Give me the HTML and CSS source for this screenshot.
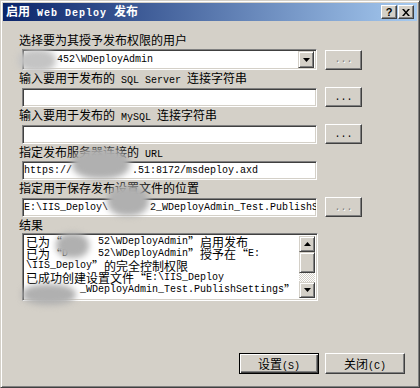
FILE: index.html
```html
<!DOCTYPE html>
<html lang="zh-CN">
<head>
<meta charset="UTF-8">
<title>启用 Web Deploy 发布</title>
<link rel="stylesheet" href="styles.css">
</head>
<body>
<div class="window">
    <div class="titlebar">
        <span class="title">启用<span class="en"> Web Deploy </span>发布</span>
        <div class="caption-btns">
            <span class="cap-btn cap-help">?</span>
            <span class="cap-btn">
                <svg width="8" height="7" viewBox="0 0 8 7"><path d="M0 0h2l2 2.5L6 0h2L5 3.5 8 7H6L4 4.5 2 7H0l3-3.5z" fill="#000"/></svg>
            </span>
        </div>
    </div>

    <div class="content">
        <div class="field">
            <label>选择要为其授予发布权限的用户</label>
            <div class="row">
                <div class="combo">
                    <span class="combo-text en">&nbsp;&nbsp;&nbsp;&nbsp;&nbsp;452\WDeployAdmin</span>
                    <span class="drop">
                        <svg width="7" height="4" viewBox="0 0 7 4"><path d="M0 0h7L3.5 4z" fill="#000"/></svg>
                    </span>
                </div>
                <button class="dots" disabled>...</button>
            </div>
        </div>
        <div class="field">
            <label>输入要用于发布的<span class="en"> SQL Server </span>连接字符串</label>
            <div class="row">
                <input class="edit" type="text" value="">
                <button class="dots">...</button>
            </div>
        </div>
        <div class="field">
            <label>输入要用于发布的<span class="en"> MySQL </span>连接字符串</label>
            <div class="row">
                <input class="edit" type="text" value="">
                <button class="dots">...</button>
            </div>
        </div>
        <div class="field">
            <label>指定发布服务器连接的<span class="en"> URL</span></label>
            <div class="row">
                <input class="edit" type="text" value="https://          .51:8172/msdeploy.axd">
            </div>
        </div>
        <div class="field">
            <label>指定用于保存发布设置文件的位置</label>
            <div class="row">
                <input class="edit" type="text" value="E:\IIS_Deploy\       2_WDeployAdmin_Test.PublishSettings">
                <button class="dots" disabled>...</button>
            </div>
        </div>
        <div class="field">
            <label>结果</label>
            <div class="results">
                <div class="results-text">
                    <div class="line">已为<span class="q ql">“</span><span class="en">&nbsp;&nbsp;&nbsp;&nbsp;&nbsp;&nbsp;52\WDeployAdmin</span><span class="q qr">”</span>启用发布</div>
                    <div class="line">已为<span class="q ql">“</span><span class="en">D&nbsp;&nbsp;&nbsp;&nbsp;&nbsp;52\WDeployAdmin</span><span class="q qr">”</span>授予在<span class="q ql">“</span><span class="en">E:</span></div>
                    <div class="line"><span class="en">\IIS_Deploy</span><span class="q qr">”</span>的完全控制权限</div>
                    <div class="line">已成功创建设置文件<span class="q ql">“</span><span class="en">E:\IIS_Deploy</span></div>
                    <div class="line"><span class="en">&nbsp;&nbsp;&nbsp;&nbsp;&nbsp;&nbsp;&nbsp;&nbsp;&nbsp;_WDeployAdmin_Test.PublishSettings</span><span class="q qr">”</span></div>
                </div>
                <div class="scrollbar">
                    <span class="sb-btn">
                        <svg width="7" height="4" viewBox="0 0 7 4"><path d="M0 4h7L3.5 0z" fill="#000"/></svg>
                    </span>
                    <span class="sb-thumb"></span>
                    <span class="sb-track"></span>
                    <span class="sb-btn">
                        <svg width="7" height="4" viewBox="0 0 7 4"><path d="M0 0h7L3.5 4z" fill="#000"/></svg>
                    </span>
                </div>
            </div>
        </div>
    </div>

    <div class="footer">
        <button class="btn btn-default">设置<span class="en">(S)</span></button>
        <button class="btn">关闭<span class="en">(C)</span></button>
    </div>

    <!-- размытые места на исходном снимке -->
    <div class="blur blur-user"></div>
    <div class="blur blur-url"></div>
    <div class="blur blur-path"></div>
    <div class="blur blur-res1"></div>
    <div class="blur blur-res2"></div>
</div>
</body>
</html>
```

FILE: styles.css
```css
body {
    margin: 0;
    font-family: "Noto Sans CJK SC", sans-serif;
    font-size: 12px;
    color: #000;
}
.en {
    font-family: "Liberation Mono", monospace;
    font-size: 10px;
}
.window {
    position: relative;
    width: 420px;
    height: 388px;
    box-sizing: border-box;
    background-color: #d4d0c8;
    border: 1px solid;
    border-color: #d4d0c8 #404040 #404040 #d4d0c8;
    box-shadow: inset 1px 1px #fff, inset -1px -1px #808080;
    padding: 2px;
    display: flex;
    flex-direction: column;
    overflow: hidden;
}
.titlebar {
    height: 18px;
    display: flex;
    align-items: center;
    justify-content: space-between;
    background: linear-gradient(to right, #0a246a, #a6caf0);
    color: #fff;
    font-weight: bold;
    padding: 0 3px 0 3px;
    line-height: 18px;
}
.title .en {
    letter-spacing: 1px;
}
.caption-btns {
    display: flex;
    gap: 1px;
}
.cap-btn {
    width: 16px;
    height: 14px;
    box-sizing: border-box;
    display: flex;
    align-items: center;
    justify-content: center;
    background-color: #d4d0c8;
    border: 1px solid;
    border-color: #fff #404040 #404040 #fff;
    box-shadow: inset -1px -1px #808080;
    color: #000;
    font-family: "Liberation Sans", sans-serif;
    font-size: 11px;
    line-height: 12px;
}
.content {
    padding: 12px 0 0 16px;
}
.field {
    margin-bottom: 1px;
}
.field label {
    display: block;
    line-height: 14px;
    height: 14px;
    white-space: nowrap;
}
.row {
    display: flex;
    align-items: center;
    margin: 2px 0 0 3px;
}
.edit, .combo, .results {
    box-sizing: border-box;
    background-color: #fff;
    border: 1px solid;
    border-color: #808080 #fff #fff #808080;
    box-shadow: inset 1px 1px #404040, inset -1px -1px #d4d0c8;
}
.edit {
    width: 295px;
    height: 19px;
    padding: 0 0 0 1px;
    margin: 0;
    font-family: "Liberation Mono", monospace;
    font-size: 10px;
    color: #000;
    outline: none;
}
.combo {
    width: 295px;
    height: 21px;
    display: flex;
    align-items: center;
    justify-content: space-between;
    padding: 2px;
}
.combo-text {
    padding-left: 2px;
    white-space: nowrap;
}
.drop, .sb-btn {
    width: 16px;
    height: 17px;
    box-sizing: border-box;
    display: flex;
    align-items: center;
    justify-content: center;
    background-color: #d4d0c8;
    border: 1px solid;
    border-color: #d4d0c8 #404040 #404040 #d4d0c8;
    box-shadow: inset 1px 1px #fff, inset -1px -1px #808080;
}
.dots {
    width: 37px;
    height: 20px;
    margin-left: 8px;
    padding: 0;
    background-color: #d4d0c8;
    border: 1px solid;
    border-color: #fff #404040 #404040 #fff;
    box-shadow: inset -1px -1px #808080;
    font-family: "Liberation Mono", monospace;
    font-size: 10px;
    color: #000;
}
.dots:disabled {
    color: #808080;
    text-shadow: 1px 1px #fff;
}
.results {
    width: 296px;
    height: 68px;
    margin: 1px 0 0 3px;
    padding: 2px;
    display: flex;
}
.results-text {
    flex: 1;
    padding-left: 1px;
    overflow: hidden;
}
.line {
    height: 12px;
    line-height: 12px;
    white-space: nowrap;
}
.line span {
    line-height: 12px;
    vertical-align: top;
}
.q {
    display: inline-block;
    width: 12px;
}
.ql {
    text-align: right;
}
.qr {
    text-align: left;
}
.scrollbar {
    width: 16px;
    display: flex;
    flex-direction: column;
}
.sb-btn {
    height: 16px;
}
.sb-thumb {
    height: 21px;
    box-sizing: border-box;
    background-color: #d4d0c8;
    border: 1px solid;
    border-color: #d4d0c8 #404040 #404040 #d4d0c8;
    box-shadow: inset 1px 1px #fff, inset -1px -1px #808080;
}
.sb-track {
    flex: 1;
    background: repeating-conic-gradient(#fff 0 25%, #d4d0c8 0 50%) 0 0 / 2px 2px;
}
.footer {
    margin-top: auto;
    display: flex;
    justify-content: flex-end;
    gap: 6px;
    padding: 0 12px 11px 0;
}
.btn {
    width: 80px;
    height: 21px;
    padding: 0;
    background-color: #d4d0c8;
    border: 1px solid;
    border-color: #fff #404040 #404040 #fff;
    box-shadow: inset -1px -1px #808080;
    font-family: "Noto Sans CJK SC", sans-serif;
    font-size: 12px;
    color: #000;
}
.btn-default {
    border-color: #000;
    box-shadow: inset 1px 1px #fff, inset -1px -1px #404040, inset -2px -2px #808080;
}
.blur {
    position: absolute;
    border-radius: 45%;
    background-color: #b0b0b0;
    filter: blur(3px);
}
.blur-user {
    left: 17px;
    top: 48px;
    width: 38px;
    height: 23px;
    background-color: #c4c4c4;
}
.blur-url {
    left: 71px;
    top: 147px;
    width: 58px;
    height: 31px;
}
.blur-path {
    left: 106px;
    top: 184px;
    width: 42px;
    height: 31px;
}
.blur-res1 {
    left: 55px;
    top: 232px;
    width: 33px;
    height: 25px;
}
.blur-res2 {
    left: 21px;
    top: 283px;
    width: 54px;
    height: 21px;
}
```
